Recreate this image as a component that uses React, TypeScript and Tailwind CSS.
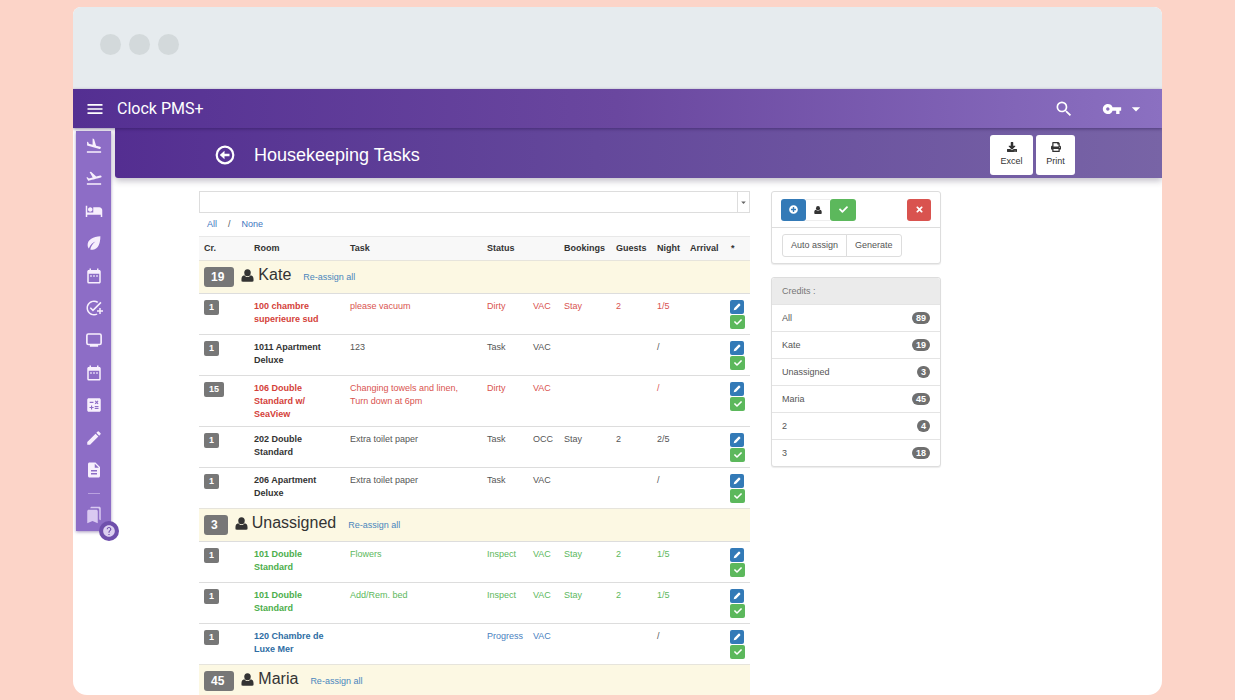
import { type ReactNode } from 'react';
import {
  MdMenu, MdSearch, MdVpnKey, MdArrowDropDown, MdFlightLand, MdFlightTakeoff, MdHotel, MdDateRange,
  MdAddTask, MdCalculate, MdEdit, MdDescription, MdBookmarks, MdHelp,
} from 'react-icons/md';
import { FaCheck, FaDownload, FaPlusCircle, FaPrint, FaTimes } from 'react-icons/fa';

type Task = {
  credits: number;
  room: string;
  task: string;
  status: string;
  occupancy: string;
  booking?: string;
  guests?: string;
  night: string;
};

type Group = { name: string; credits: number; tasks: Task[] };

const groups: Group[] = [
  {
    name: 'Kate',
    credits: 19,
    tasks: [
      { credits: 1, room: '100 chambre superieure sud', task: 'please vacuum', status: 'Dirty', occupancy: 'VAC', booking: 'Stay', guests: '2', night: '1/5' },
      { credits: 1, room: '1011 Apartment Deluxe', task: '123', status: 'Task', occupancy: 'VAC', night: '/' },
      { credits: 15, room: '106 Double Standard w/ SeaView', task: 'Changing towels and linen, Turn down at 6pm', status: 'Dirty', occupancy: 'VAC', night: '/' },
      { credits: 1, room: '202 Double Standard', task: 'Extra toilet paper', status: 'Task', occupancy: 'OCC', booking: 'Stay', guests: '2', night: '2/5' },
      { credits: 1, room: '206 Apartment Deluxe', task: 'Extra toilet paper', status: 'Task', occupancy: 'VAC', night: '/' },
    ],
  },
  {
    name: 'Unassigned',
    credits: 3,
    tasks: [
      { credits: 1, room: '101 Double Standard', task: 'Flowers', status: 'Inspect', occupancy: 'VAC', booking: 'Stay', guests: '2', night: '1/5' },
      { credits: 1, room: '101 Double Standard', task: 'Add/Rem. bed', status: 'Inspect', occupancy: 'VAC', booking: 'Stay', guests: '2', night: '1/5' },
      { credits: 1, room: '120 Chambre de Luxe Mer', task: '', status: 'Progress', occupancy: 'VAC', night: '/' },
    ],
  },
  { name: 'Maria', credits: 45, tasks: [] },
];

const credits = [
  ['All', 89],
  ['Kate', 19],
  ['Unassigned', 3],
  ['Maria', 45],
  ['2', 4],
  ['3', 18],
] as const;

const statusColor: Record<string, string> = {
  Dirty: 'text-[#d9534f]',
  Task: 'text-[#555555]',
  Inspect: 'text-[#5cb85c]',
  Progress: 'text-[#4a7fc0]',
};

const roomColor: Record<string, string> = {
  Dirty: 'text-[#d43f3a]',
  Task: 'text-[#333333]',
  Inspect: 'text-[#4cae4c]',
  Progress: 'text-[#2e6da4]',
};

function UserIcon({ className }: { className?: string }) {
  return (
    <svg viewBox="0 0 14 14" fill="currentColor" className={className} aria-hidden="true">
      <ellipse cx="7" cy="4" rx="3.5" ry="3.8" />
      <path d="M3.6 6.700C1.400 7 .5 8.700.5 11v1.500c0 .8.5 1.300 1.300 1.300h10.400c.8 0 1.300-.5 1.300-1.300V11c0-2.300-.9-4-3.100-4.300C9.600 7.900 8.400 8.600 7 8.600s-2.600-.7-3.400-1.900z" />
    </svg>
  );
}

function BackIcon() {
  return (
    <svg viewBox="0 0 20 20" className="size-5" aria-hidden="true">
      <circle cx="10" cy="10" r="8.3" fill="none" stroke="currentColor" strokeWidth="2.2" />
      <path d="M4.8 10l4.700-4.200v2.900h5v2.600h-5v2.900z" fill="currentColor" />
    </svg>
  );
}

function LeafIcon({ className }: { className?: string }) {
  return (
    <svg viewBox="0 0 24 24" className={className} aria-hidden="true">
      <path d="M20.500 3C11 3.500 3.500 7.500 3.500 14.500c0 2 .6 3.500 1.600 4.700C7 14.500 10 11.500 14 10c-3.500 2.500-6 6-7 10.500 1 .5 2.200.7 3.500.5C18 20 20.500 12 20.500 3z" fill="currentColor" />
    </svg>
  );
}

function ScreenIcon({ className }: { className?: string }) {
  return (
    <svg viewBox="0 0 24 24" className={className} aria-hidden="true">
      <rect x="2.500" y="4" width="19" height="14" rx="2" fill="none" stroke="currentColor" strokeWidth="2.2" />
      <path d="M6.500 18h11v3h-11z" fill="currentColor" />
    </svg>
  );
}

function PencilIcon({ className }: { className?: string }) {
  return (
    <svg viewBox="0 0 12 12" fill="currentColor" className={className} aria-hidden="true">
      <path d="M8.200 1.200a1.200 1.200 0 0 1 1.700 0l.9.9a1.200 1.200 0 0 1 0 1.700L4.600 10 1 11l1-3.600z" />
    </svg>
  );
}

const sideItems = [
  { label: 'Arrivals', icon: MdFlightLand },
  { label: 'Departures', icon: MdFlightTakeoff },
  { label: 'Rooms', icon: MdHotel },
  { label: 'Eco', icon: LeafIcon },
  { label: 'Calendar', icon: MdDateRange },
  { label: 'Add task', icon: MdAddTask },
  { label: 'Display', icon: ScreenIcon },
  { label: 'Events', icon: MdDateRange },
  { label: 'Calculator', icon: MdCalculate },
  { label: 'Edit', icon: MdEdit },
  { label: 'Documents', icon: MdDescription },
];

function TopBar() {
  return (
    <header className="relative z-10 flex h-[39px] shrink-0 items-center bg-linear-to-r from-[#542f92] via-[#6a479f] to-[#8b70c1] pr-4 pl-3 text-white shadow-[0_1px_3px_rgba(40,20,80,0.5)]">
      <button aria-label="Menu"><MdMenu className="size-5" /></button>
      <span className="ml-3 font-[Roboto,sans-serif] text-[16px]">Clock PMS+</span>
      <div className="ml-auto flex items-center">
        <button aria-label="Search"><MdSearch className="size-5" /></button>
        <button aria-label="Account" className="ml-7 flex items-center gap-1">
          <MdVpnKey className="size-5" />
          <MdArrowDropDown className="size-5" />
        </button>
      </div>
    </header>
  );
}

function Sidebar() {
  return (
    <div className="shrink-0 py-[3px] pr-1 pl-[3px]">
      <nav className="relative flex h-[400px] w-[35px] flex-col items-center bg-[#8d6dc6] pt-[6px] text-[#f7effd] shadow-[0_1px_3px_rgba(80,50,130,0.5)]">
        <div className="flex h-[342px] flex-col justify-between">
          {sideItems.map(({ label, icon: Icon }) => (
            <a key={label} href="#" aria-label={label}><Icon className="size-[18px]" /></a>
          ))}
        </div>
        <hr className="mt-[14px] w-3 border-[#b9a1df]" />
        <a href="#" aria-label="Bookmarks" className="mt-3 text-[#d9c9f1]"><MdBookmarks className="size-[18px]" /></a>
        <a href="#" aria-label="Help" className="absolute -right-2 -bottom-2.5 flex size-5 items-center justify-center rounded-full bg-[#6f4fac] text-[#dccff0]">
          <MdHelp className="size-[14px]" />
        </a>
      </nav>
    </div>
  );
}

function PageHeader() {
  return (
    <div className="flex h-[50px] items-center rounded-bl-[3px] bg-linear-to-r from-[#542e91] to-[#7864a6] pt-1 pr-[87px] pl-[100px] text-white shadow-[0_3px_6px_rgba(60,50,80,0.3)]">
      <a href="#" aria-label="Back"><BackIcon /></a>
      <h1 className="ml-[19px] text-[18px]">Housekeeping Tasks</h1>
      <div className="ml-auto flex gap-[3px] text-[9px] text-[#333333]">
        <button className="flex h-10 w-[43px] flex-col items-center justify-center gap-[3px] rounded-[3px] bg-white">
          <FaDownload className="size-[10px]" /> Excel
        </button>
        <button className="flex h-10 w-[39px] flex-col items-center justify-center gap-[3px] rounded-[3px] bg-white">
          <FaPrint className="size-[10px]" /> Print
        </button>
      </div>
    </div>
  );
}

function GroupRow({ group }: { group: Group }) {
  return (
    <tr className="h-[33px] border-t border-[#e6e4dc] bg-[#fcf8e3]">
      <td colSpan={10} className="p-0 pb-1 pl-[5px] align-middle">
        <div className="flex items-center">
          <span className="mt-[3px] rounded-[3px] bg-[#777777] px-[7px] text-[12px] leading-5 font-bold text-white">
            {group.credits}<span className="inline-block w-[3px]" />
          </span>
          <UserIcon className="ml-[7px] size-[13px] text-[#333333]" />
          <span className="ml-1 text-[16px] leading-5 text-[#333333]">{group.name}</span>
          <a href="#" className="ml-3 pt-[5px] text-[#4a86bd]">Re-assign all</a>
        </div>
      </td>
    </tr>
  );
}

function TaskRow({ row }: { row: Task }) {
  const cell = 'pt-[6px] pb-[5px] pl-[5px]';
  return (
    <tr className={`border-t border-[#dddddd] align-top ${statusColor[row.status]}`}>
      <td className={cell}>
        <span className="block w-fit rounded-[2px] bg-[#777777] px-[5px] leading-[15px] font-bold text-white">{row.credits}</span>
      </td>
      <td className={`${cell} pr-3 font-bold ${roomColor[row.status]}`}>{row.room}</td>
      <td className={`${cell} pr-3`}>{row.task}</td>
      <td className={cell}>{row.status}</td>
      <td className={cell}>{row.occupancy}</td>
      <td className={cell}>{row.booking}</td>
      <td className={cell}>{row.guests}</td>
      <td className={`${cell} ${row.night === '/' && row.status === 'Progress' ? 'text-[#555555]' : ''}`}>{row.night}</td>
      <td className={cell}></td>
      <td className="pt-[6px] pb-[5px] pl-1">
        <div className="flex flex-col items-start gap-px text-white">
          <button aria-label="Edit task" className="flex h-[14px] w-[14px] items-center justify-center rounded-[2px] bg-[#337ab7]"><PencilIcon className="size-2" /></button>
          <button aria-label="Complete task" className="flex h-[14px] w-[15px] items-center justify-center rounded-[2px] bg-[#5cb85c]"><FaCheck className="size-2" /></button>
        </div>
      </td>
    </tr>
  );
}

function TaskTable() {
  return (
    <table className="w-full table-fixed border-collapse text-left">
      <colgroup>
        <col className="w-[50px]" />
        <col className="w-[96px]" />
        <col />
        <col className="w-[46px]" />
        <col className="w-[31px]" />
        <col className="w-[52px]" />
        <col className="w-[41px]" />
        <col className="w-[33px]" />
        <col className="w-[41px]" />
        <col className="w-[24px]" />
      </colgroup>
      <thead>
        <tr className="h-6 border-t border-[#e8e8e8] bg-[#f8f8f8] text-[#333333]">
          {['Cr.', 'Room', 'Task', 'Status', '', 'Bookings', 'Guests', 'Night', 'Arrival', '*'].map((h, i) => <th key={i} className="py-0 pl-[5px] font-bold">{h}</th>)}
        </tr>
      </thead>
      {groups.map(g => (
        <tbody key={g.name}>
          <GroupRow group={g} />
          {g.tasks.map((t, i) => <TaskRow key={i} row={t} />)}
        </tbody>
      ))}
    </table>
  );
}

function Panel({ children }: { children: ReactNode }) {
  return <section className="rounded-[3px] border border-[#dddddd] bg-white shadow-[0_1px_1px_rgba(0,0,0,0.08)]">{children}</section>;
}

function Aside() {
  return (
    <aside className="flex flex-col gap-[13px] text-[#555555]">
      <Panel>
        <div className="flex h-9 items-center border-b border-[#dddddd] px-[9px] text-white">
          <button aria-label="Add" className="flex h-[22px] w-[25px] items-center justify-center rounded-[3px] bg-[#337ab7]"><FaPlusCircle className="size-[9px]" /></button>
          <button aria-label="Assign" className="flex h-[22px] w-6 items-center justify-center border-y border-[#eeeeee] text-[#333333]"><UserIcon className="size-2" /></button>
          <button aria-label="Complete" className="flex h-[22px] w-[26px] items-center justify-center rounded-[3px] bg-[#5cb85c]"><FaCheck className="size-[9px]" /></button>
          <button aria-label="Delete" className="ml-auto flex h-[22px] w-6 items-center justify-center rounded-[3px] bg-[#d9534f]"><FaTimes className="size-[9px]" /></button>
        </div>
        <div className="flex px-[10px] py-[6px]">
          <button className="h-[23px] rounded-l-[3px] border border-[#dddddd] px-2">Auto assign</button>
          <button className="-ml-px h-[23px] rounded-r-[3px] border border-[#dddddd] px-2">Generate</button>
        </div>
      </Panel>
      <Panel>
        <h2 className="flex h-[26px] items-center rounded-t-[3px] bg-[#ebebeb] px-[10px] text-[#777777]">Credits :</h2>
        <ul>
          {credits.map(([name, count]) => (
            <li key={name} className="flex h-[27px] items-center justify-between border-t border-[#e4e4e4] px-[10px]">
              <span>{name}</span>
              <span className="rounded-full bg-[#6f6f6f] px-1 text-[9px] leading-3 font-bold text-white">{count}</span>
            </li>
          ))}
        </ul>
      </Panel>
    </aside>
  );
}

export default function App() {
  return (
    <div className="h-screen bg-[#fcd4c8] px-[73px] pt-[7px] pb-[5px] font-['Liberation_Sans',Arial,sans-serif]">
      <div className="flex h-full flex-col overflow-hidden rounded-t-[8px] rounded-b-[14px] bg-white">
        <div className="flex h-[82px] shrink-0 items-center gap-2 bg-[#e6ebee] pb-[7px] pl-[27px]">
          <span className="size-[21px] rounded-full bg-[#d3d9db]" />
          <span className="size-[21px] rounded-full bg-[#d3d9db]" />
          <span className="size-[21px] rounded-full bg-[#d3d9db]" />
        </div>
        <TopBar />
        <div className="flex min-h-0 flex-1">
          <Sidebar />
          <div className="min-w-0 flex-1">
            <PageHeader />
            <main className="grid grid-cols-[minmax(0,551fr)_minmax(0,170fr)] items-start gap-[21px] pt-[13px] pr-[221px] pl-[84px] text-[9px] leading-[13px]">
              <div>
                <div className="flex h-[22px] border border-[#dddddd]">
                  <input aria-label="Filter tasks" className="min-w-0 flex-1 px-2 outline-none" />
                  <button aria-label="Show filters" className="flex w-3 items-center justify-center border-l border-[#dddddd] text-[#666666]"><MdArrowDropDown className="size-[11px]" /></button>
                </div>
                <div className="flex h-[23px] items-center gap-[11px] pl-2 text-[#3f76c0]">
                  <a href="#">All</a>
                  <span className="text-[#555555]">/</span>
                  <a href="#">None</a>
                </div>
                <TaskTable />
              </div>
              <Aside />
            </main>
          </div>
        </div>
      </div>
    </div>
  );
}
